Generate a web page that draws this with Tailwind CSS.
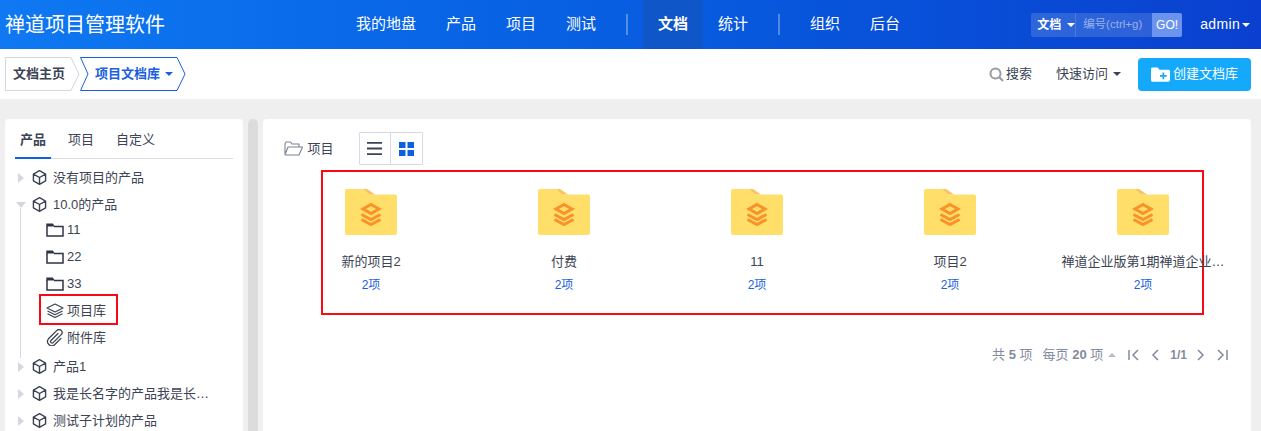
<!DOCTYPE html>
<html lang="zh-CN">
<head>
<meta charset="UTF-8">
<title>文档</title>
<script src="https://cdn.jsdelivr.net/npm/@tailwindcss/browser@4"></script>
</head>
<body class="w-[1261px] h-[431px] overflow-hidden bg-[#efefef] font-['Liberation_Sans','Noto_Sans_CJK_SC',sans-serif] text-[13px] text-[#3c4353]">

<!-- top nav -->
<header class="relative h-[49px] flex items-center text-white bg-gradient-to-r from-[#0f78f2] to-[#0b40cf]">
  <div class="w-[341px] pl-[5px] text-[20px]">禅道项目管理软件</div>
  <nav class="flex items-center h-full text-[15px]">
    <a class="h-full flex items-center px-[15px]">我的地盘</a>
    <a class="h-full flex items-center px-[15px]">产品</a>
    <a class="h-full flex items-center px-[15px]">项目</a>
    <a class="h-full flex items-center px-[15px]">测试</a>
    <span class="mx-[15px] w-[2px] h-[21px] bg-white/30"></span>
    <a class="h-full flex items-center px-[15px] font-bold bg-[#0f56c9]">文档</a>
    <a class="h-full flex items-center px-[15px]">统计</a>
    <span class="mx-[15px] w-[2px] h-[21px] bg-white/30"></span>
    <a class="h-full flex items-center px-[15px]">组织</a>
    <a class="h-full flex items-center px-[15px]">后台</a>
  </nav>
  <div class="ml-[116px] flex items-center w-[151px] h-[24px] bg-white/15 rounded-[2px] text-[12px]">
    <span class="w-[45px] pl-[6px] flex items-center gap-[6px] border-r border-white/15 h-full font-bold">文档<i class="border-x-[4px] border-x-transparent border-t-[4px] border-t-white"></i></span>
    <span class="pl-[7px] w-[76px] text-white/50 text-[11.5px] whitespace-nowrap">编号(ctrl+g)</span>
    <span class="w-[30px] h-full flex items-center justify-center bg-[#6c94ee] rounded-r-[2px]">GO!</span>
  </div>
  <div class="ml-[18px] flex items-center gap-[2px] text-[14px] tracking-[0.4px]">admin<i class="border-x-[4px] border-x-transparent border-t-[4px] border-t-white"></i></div>
</header>

<!-- sub nav -->
<div class="h-[50px] bg-white flex items-center pl-[5px] pr-[10px]">
  <div class="relative w-[75px] h-[34px] flex items-center pl-[8px] font-bold text-[13px] text-[#3c4353]">
    <svg class="absolute left-0 top-0" width="75" height="34" fill="none" stroke="#d5d5e0"><path d="M66 .5H.5v33H66L74 17z"/></svg>
    <span class="relative">文档主页</span>
  </div>
  <div class="relative w-[106px] h-[34px] flex items-center pl-[15px] gap-[5px] font-bold text-[13px] text-[#1a5fe0]">
    <svg class="absolute left-0 top-0" width="106" height="34" fill="none" stroke="#1a5fe0"><path d="M.5 .5H97L105 17l-8 16.500H.5L8 17z"/></svg>
    <span class="relative">项目文档库</span><i class="relative border-x-[4px] border-x-transparent border-t-[4px] border-t-[#1a5fe0]"></i>
  </div>
  <div class="ml-auto flex items-center gap-[2px] text-[#3c4353]">
    <svg width="15" height="15" viewBox="0 0 15 15" fill="none" stroke="#9a9aa3" stroke-width="2"><circle cx="6.500" cy="6.500" r="5"/><path d="M10 10l4 4"/></svg>
    搜索
  </div>
  <div class="ml-[24px] flex items-center gap-[5px]">快速访问<i class="border-x-[4px] border-x-transparent border-t-[4px] border-t-[#3c4353]"></i></div>
  <button class="ml-[17px] w-[113px] h-[33px] rounded-[4px] bg-[#14a9fb] text-white flex items-center pl-[13px] gap-[3px]">
    <svg width="19" height="15" viewBox="0 0 20 15"><path fill="#fff" d="M1.500 0H7l2 2.500h9.500A1.500 1.500 0 0 1 20 4v9.500a1.500 1.500 0 0 1-1.500 1.500h-17A1.500 1.500 0 0 1 0 13.500v-12A1.500 1.500 0 0 1 1.500 0z"/><path stroke="#14a9fb" stroke-width="1.800" d="M9.500 9h7M13 5.500v7"/></svg>
    创建文档库
  </button>
</div>

<div class="flex pt-[20px] pl-[5px] h-[332px]">
  <!-- tree -->
  <aside class="relative w-[238px] h-[320px] bg-white rounded-t-[4px] px-[10px] pt-[8px] overflow-hidden">
    <div class="flex h-[32px] border-b border-[#dcdce4] text-[13px]">
      <span class="relative w-[36px] text-center leading-[26px] font-bold">产品<i class="absolute left-0 -bottom-px w-full h-[2px] bg-[#0c60e1]"></i></span>
      <span class="ml-[17px] leading-[26px]">项目</span>
      <span class="ml-[22px] leading-[26px]">自定义</span>
    </div>
    <ul class="relative mt-[5px]">
      <li class="h-[27px] flex items-center"><i class="ml-[3px] border-y-[5px] border-y-transparent border-l-[6px] border-l-[#d3d7e0]"></i><svg class="ml-[8px] mr-[6px]" width="15" height="17" viewBox="0 0 16 17" fill="none" stroke="#3c4353" stroke-width="1.500" stroke-linejoin="round"><path d="M8 1.200 14.500 4.800v7.400L8 15.800 1.500 12.200V4.800zM1.500 4.800 8 8.500l6.500-3.700M8 8.500v7.300"/></svg>没有项目的产品</li>
      <li class="h-[27px] flex items-center"><i class="ml-[1px] border-x-[5px] border-x-transparent border-t-[6px] border-t-[#d3d7e0]"></i><svg class="ml-[6px] mr-[6px]" width="15" height="17" viewBox="0 0 16 17" fill="none" stroke="#3c4353" stroke-width="1.500" stroke-linejoin="round"><path d="M8 1.200 14.500 4.800v7.400L8 15.800 1.500 12.200V4.800zM1.500 4.800 8 8.500l6.500-3.700M8 8.500v7.300"/></svg>10.0的产品</li>
      <li class="relative mt-[-2px] mb-[2px]">
        <i class="absolute left-[5px] top-[-8px] w-px h-[150px] bg-[#d8d8e0]"></i>
        <ul class="pl-[31px]">
          <li class="h-[27px] flex items-center gap-[3px]"><svg width="18" height="14" viewBox="0 0 18 14" fill="none" stroke="#2e3346" stroke-width="1.500"><path d="M1 3v10h16V3.500H8"/><path fill="#2e3346" stroke="none" d="M.3 .5h6.500l2 3H.3z"/></svg>11</li>
          <li class="h-[27px] flex items-center gap-[3px]"><svg width="18" height="14" viewBox="0 0 18 14" fill="none" stroke="#2e3346" stroke-width="1.500"><path d="M1 3v10h16V3.500H8"/><path fill="#2e3346" stroke="none" d="M.3 .5h6.500l2 3H.3z"/></svg>22</li>
          <li class="h-[27px] flex items-center gap-[3px]"><svg width="18" height="14" viewBox="0 0 18 14" fill="none" stroke="#2e3346" stroke-width="1.500"><path d="M1 3v10h16V3.500H8"/><path fill="#2e3346" stroke="none" d="M.3 .5h6.500l2 3H.3z"/></svg>33</li>
          <li class="relative h-[27px] flex items-center gap-[3px]">
            <svg width="18" height="15" viewBox="0 0 18 15" fill="none" stroke="#3c4353" stroke-width="1.200" stroke-linejoin="round"><path d="M9 1 17 5 9 9 1 5zM1.500 8 9 11.700 16.500 8M1.500 10.800 9 14.500l7.500-3.700"/></svg>项目库
            <i class="absolute left-[-7px] top-[-3px] w-[79px] h-[31px] border-2 border-[#f70a14]"></i>
          </li>
          <li class="h-[27px] flex items-center gap-[3px]"><svg width="18" height="17" viewBox="0 0 18 17" fill="none" stroke="#3c4353" stroke-width="1.300" stroke-linecap="round"><path d="M12 4.500 5 11.500a1.500 1.500 0 0 0 2.200 2.100l8-8a3 3 0 0 0-4.300-4.200L2.500 9.800a4.300 4.300 0 0 0 6.100 6l6.400-6.400"/></svg>附件库</li>
        </ul>
      </li>
      <li class="h-[27px] flex items-center"><i class="ml-[3px] border-y-[5px] border-y-transparent border-l-[6px] border-l-[#d3d7e0]"></i><svg class="ml-[8px] mr-[6px]" width="15" height="17" viewBox="0 0 16 17" fill="none" stroke="#3c4353" stroke-width="1.500" stroke-linejoin="round"><path d="M8 1.200 14.500 4.800v7.400L8 15.800 1.500 12.200V4.800zM1.500 4.800 8 8.500l6.500-3.700M8 8.500v7.300"/></svg>产品1</li>
      <li class="h-[27px] flex items-center"><i class="ml-[3px] border-y-[5px] border-y-transparent border-l-[6px] border-l-[#d3d7e0]"></i><svg class="ml-[8px] mr-[6px]" width="15" height="17" viewBox="0 0 16 17" fill="none" stroke="#3c4353" stroke-width="1.500" stroke-linejoin="round"><path d="M8 1.200 14.500 4.800v7.400L8 15.800 1.500 12.200V4.800zM1.500 4.800 8 8.500l6.500-3.700M8 8.500v7.300"/></svg>我是长名字的产品我是长…</li>
      <li class="h-[27px] flex items-center"><i class="ml-[3px] border-y-[5px] border-y-transparent border-l-[6px] border-l-[#d3d7e0]"></i><svg class="ml-[8px] mr-[6px]" width="15" height="17" viewBox="0 0 16 17" fill="none" stroke="#3c4353" stroke-width="1.500" stroke-linejoin="round"><path d="M8 1.200 14.500 4.800v7.400L8 15.800 1.500 12.200V4.800zM1.500 4.800 8 8.500l6.500-3.700M8 8.500v7.300"/></svg>测试子计划的产品</li>
    </ul>
  </aside>

  <!-- gutter -->
  <div class="ml-[5px] w-[10px] h-[320px] rounded-t-[5px] bg-[#dcdcdc]"></div>

  <!-- main -->
  <main class="relative ml-[5px] w-[988px] h-[320px] bg-white rounded-t-[4px] px-[11.500px] pt-[13px]">
    <div class="flex items-center h-[33px]">
      <svg class="ml-[9px]" width="19" height="15" viewBox="0 0 19 15" fill="none" stroke="#7c8296" stroke-width="1.100" stroke-linejoin="round"><path d="M1 13.500V2.500L2 1h4.500L8 3h7v3M1 13.500 4 6h14.500L15 14H1.500z"/></svg>
      <span class="ml-[5px]">项目</span>
      <div class="ml-[25px] flex h-[33px] border border-[#d9d9e3] rounded-[1px]">
        <span class="w-[31px] flex items-center justify-center border-r border-[#d9d9e3]">
          <svg width="15" height="13" viewBox="0 0 15 13" fill="#3c4353"><path d="M0 0h15v1.800H0zM0 5.600h15v1.800H0zM0 11.200h15V13H0z"/></svg>
        </span>
        <span class="w-[31px] flex items-center justify-center">
          <svg width="15" height="14" viewBox="0 0 15 14" fill="#0c60e1"><path d="M0 0h6.500v6H0zM8.500 0H15v6H8.500zM0 8h6.500v6H0zM8.500 8H15v6H8.500z"/></svg>
        </span>
      </div>
    </div>

    <!-- libs -->
    <div class="relative grid grid-cols-5 mt-[5px] h-[145px] pt-[19px] text-center">
      <i class="absolute left-[46.500px] top-0 w-[883px] h-[145px] border-2 border-[#f70a14]"></i>
      <div class="flex flex-col items-center">
        <svg width="52" height="46" viewBox="0 0 52 46"><path fill="#ffdf69" d="M2 0h16l6 5.500h26a2 2 0 0 1 2 2V44a2 2 0 0 1-2 2H2a2 2 0 0 1-2-2V2a2 2 0 0 1 2-2z"/><path fill="#fbc35c" d="M18 0h4l8 5.500h-6z"/><path fill="none" stroke="#f9922a" stroke-width="3" d="M26 15.500 34 20l-8 4.500-8-4.500z"/><path fill="none" stroke="#f9922a" stroke-width="3" d="M16.500 25.500l9.500 5 9.500-5M16.500 30.500l9.500 5 9.500-5"/></svg>
        <div class="mt-[18px] w-[165px] whitespace-nowrap leading-[18px]">新的项目2</div>
        <div class="mt-[6px] text-[12px] leading-[16px] text-[#1a5fe0]">2项</div>
      </div>
      <div class="flex flex-col items-center">
        <svg width="52" height="46" viewBox="0 0 52 46"><path fill="#ffdf69" d="M2 0h16l6 5.500h26a2 2 0 0 1 2 2V44a2 2 0 0 1-2 2H2a2 2 0 0 1-2-2V2a2 2 0 0 1 2-2z"/><path fill="#fbc35c" d="M18 0h4l8 5.500h-6z"/><path fill="none" stroke="#f9922a" stroke-width="3" d="M26 15.500 34 20l-8 4.500-8-4.500z"/><path fill="none" stroke="#f9922a" stroke-width="3" d="M16.500 25.500l9.500 5 9.500-5M16.500 30.500l9.500 5 9.500-5"/></svg>
        <div class="mt-[18px] w-[165px] whitespace-nowrap leading-[18px]">付费</div>
        <div class="mt-[6px] text-[12px] leading-[16px] text-[#1a5fe0]">2项</div>
      </div>
      <div class="flex flex-col items-center">
        <svg width="52" height="46" viewBox="0 0 52 46"><path fill="#ffdf69" d="M2 0h16l6 5.500h26a2 2 0 0 1 2 2V44a2 2 0 0 1-2 2H2a2 2 0 0 1-2-2V2a2 2 0 0 1 2-2z"/><path fill="#fbc35c" d="M18 0h4l8 5.500h-6z"/><path fill="none" stroke="#f9922a" stroke-width="3" d="M26 15.500 34 20l-8 4.500-8-4.500z"/><path fill="none" stroke="#f9922a" stroke-width="3" d="M16.500 25.500l9.500 5 9.500-5M16.500 30.500l9.500 5 9.500-5"/></svg>
        <div class="mt-[18px] w-[165px] whitespace-nowrap leading-[18px]">11</div>
        <div class="mt-[6px] text-[12px] leading-[16px] text-[#1a5fe0]">2项</div>
      </div>
      <div class="flex flex-col items-center">
        <svg width="52" height="46" viewBox="0 0 52 46"><path fill="#ffdf69" d="M2 0h16l6 5.500h26a2 2 0 0 1 2 2V44a2 2 0 0 1-2 2H2a2 2 0 0 1-2-2V2a2 2 0 0 1 2-2z"/><path fill="#fbc35c" d="M18 0h4l8 5.500h-6z"/><path fill="none" stroke="#f9922a" stroke-width="3" d="M26 15.500 34 20l-8 4.500-8-4.500z"/><path fill="none" stroke="#f9922a" stroke-width="3" d="M16.500 25.500l9.500 5 9.500-5M16.500 30.500l9.500 5 9.500-5"/></svg>
        <div class="mt-[18px] w-[165px] whitespace-nowrap leading-[18px]">项目2</div>
        <div class="mt-[6px] text-[12px] leading-[16px] text-[#1a5fe0]">2项</div>
      </div>
      <div class="relative flex flex-col items-center">
        <svg width="52" height="46" viewBox="0 0 52 46"><path fill="#ffdf69" d="M2 0h16l6 5.500h26a2 2 0 0 1 2 2V44a2 2 0 0 1-2 2H2a2 2 0 0 1-2-2V2a2 2 0 0 1 2-2z"/><path fill="#fbc35c" d="M18 0h4l8 5.500h-6z"/><path fill="none" stroke="#f9922a" stroke-width="3" d="M26 15.500 34 20l-8 4.500-8-4.500z"/><path fill="none" stroke="#f9922a" stroke-width="3" d="M16.500 25.500l9.500 5 9.500-5M16.500 30.500l9.500 5 9.500-5"/></svg>
        <div class="mt-[18px] w-[165px] whitespace-nowrap leading-[18px]">禅道企业版第1期禅道企业…</div>
        <div class="mt-[6px] text-[12px] leading-[16px] text-[#1a5fe0]">2项</div>
      </div>
    </div>

    <!-- pager -->
    <div class="flex items-center justify-end mt-[32px] pr-[11.500px] h-[16px] text-[13px] text-[#838a9d]">
      <span>共 <b>5</b> 项</span>
      <span class="ml-[10px]">每页 <b>20</b> 项</span>
      <i class="ml-[5px] border-x-[4px] border-x-transparent border-b-[4px] border-b-[#b9bdc9]"></i>
      <svg class="ml-[12px]" width="12" height="12" viewBox="0 0 12 12" fill="none" stroke="#838a9d" stroke-width="1.500"><path d="M1 1v10M10 1 5 6l5 5"/></svg>
      <svg class="ml-[11px]" width="8" height="12" viewBox="0 0 8 12" fill="none" stroke="#838a9d" stroke-width="1.500"><path d="M7 1 2 6l5 5"/></svg>
      <b class="ml-[11px] text-[12px]">1/1</b>
      <svg class="ml-[10px]" width="8" height="12" viewBox="0 0 8 12" fill="none" stroke="#838a9d" stroke-width="1.500"><path d="M1 1l5 5-5 5"/></svg>
      <svg class="ml-[11px]" width="12" height="12" viewBox="0 0 12 12" fill="none" stroke="#838a9d" stroke-width="1.500"><path d="M2 1l5 5-5 5M11 1v10"/></svg>
    </div>
  </main>
</div>
</body>
</html>
